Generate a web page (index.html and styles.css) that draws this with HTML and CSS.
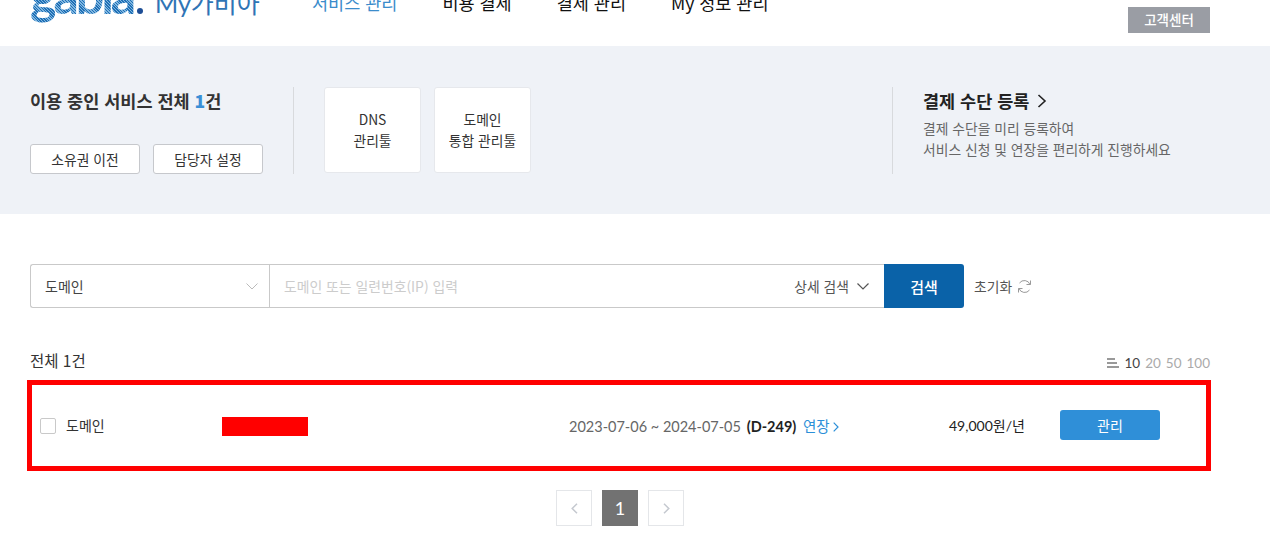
FILE: index.html
```html
<!DOCTYPE html>
<html lang="ko">
<head>
<meta charset="utf-8">
<title>My가비아</title>
<link rel="stylesheet" href="styles.css">
</head>
<body>
<header class="top">
  <div class="brand"><span class="logo">gabia</span><span class="dot"></span><span class="my">My가비아</span></div>
  <nav class="gnb">
    <a class="on">서비스 관리</a><a>비용 결제</a><a>결제 관리</a><a>My 정보 관리</a>
  </nav>
  <a class="help">고객센터</a>
</header>
<section class="band">
  <div class="summary">
    <h2>이용 중인 서비스 전체 <b>1</b>건</h2>
    <div class="sum-btns"><button>소유권 이전</button><button>담당자 설정</button></div>
  </div>
  <div class="tools">
    <a class="tool">DNS<br>관리툴</a>
    <a class="tool">도메인<br>통합 관리툴</a>
  </div>
  <div class="pay">
    <h3>결제 수단 등록 <svg width="10" height="14" viewBox="0 0 10 14"><path d="M1.500 1l6.500 6-6.500 6" fill="none" stroke="#222" stroke-width="1.600"/></svg></h3>
    <p>결제 수단을 미리 등록하여<br>서비스 신청 및 연장을 편리하게 진행하세요</p>
  </div>
</section>
<main class="content">
  <form class="search">
    <div class="box">
      <div class="sel">도메인<svg width="12" height="7" viewBox="0 0 12 7"><path d="M.5.5l5.500 5.500L11.500.5" fill="none" stroke="#bbb"/></svg></div>
      <div class="inp"><span class="ph">도메인 또는 일련번호(IP) 입력</span><span class="adv">상세 검색<svg width="12" height="7" viewBox="0 0 12 7"><path d="M.5.5l5.500 5.500L11.500.5" fill="none" stroke="#555" stroke-width="1.200"/></svg></span></div>
    </div>
    <button class="go" type="button">검색</button>
    <a class="reset">초기화<svg width="15" height="15" viewBox="0 0 15 15"><path d="M13 5.500A6 6 0 0 0 2.500 4M2 9.500A6 6 0 0 0 12.500 11" fill="none" stroke="#999"/><path d="M13.500 1.500v4h-4M1.500 13.500v-4h4" fill="none" stroke="#999"/></svg></a>
  </form>
  <div class="listhead">
    <span class="total">전체 1건</span>
    <span class="sizes"><i class="bars"><s></s><s></s><s></s></i><em>10</em><span>20</span><span>50</span><span>100</span></span>
  </div>
  <div class="row">
    <label class="name"><i class="chk"></i>도메인</label>
    <i class="redact"></i>
    <span class="date">2023-07-06 ~ 2024-07-05 <b>(D-249)</b> <a>연장<svg width="6" height="10" viewBox="0 0 6 10"><path d="M.7.7L5 5 .7 9.300" fill="none" stroke="#2b8fd8" stroke-width="1.200"/></svg></a></span>
    <span class="price">49,000원/년</span>
    <button class="manage">관리</button>
  </div>
  <div class="pager">
    <a><svg width="7" height="11" viewBox="0 0 7 11"><path d="M6 .8L1.200 5.500 6 10.200" fill="none" stroke="#c5c9d0" stroke-width="1.500"/></svg></a>
    <a class="cur">1</a>
    <a><svg width="7" height="11" viewBox="0 0 7 11"><path d="M1 .8l4.800 4.700L1 10.200" fill="none" stroke="#c5c9d0" stroke-width="1.500"/></svg></a>
  </div>
</main>
</body>
</html>
```
FILE: styles.css
```css
* { box-sizing: border-box; }
html, body { margin: 0; height: 551px; overflow: hidden; }
body { font-family: "Noto Sans CJK KR", "Noto Sans", sans-serif; color: #333; background: #fff; font-size: 14px; }
a { color: inherit; text-decoration: none; }
button { font-family: inherit; cursor: pointer; }
h2, h3, p { margin: 0; }

.top { height: 46px; display: flex; padding: 0 60px 0 30px; overflow: hidden; position: relative; }
.brand { display: flex; align-items: flex-end; height: 14px; width: 282px; flex: none; }
.logo { font: 700 50px/66px "Lato", sans-serif; letter-spacing: -3px; margin-bottom: -14px; width: 107px; flex: none; color: transparent; background: repeating-linear-gradient(45deg, #1f6fb5 0 1px, #7fb6e0 1px 2px); -webkit-background-clip: text; background-clip: text; }
.dot { width: 6px; height: 6px; border-radius: 50%; background: #1d4e96; flex: none; margin: 0 12px 0 0; }
.my { font: 400 25px/27px "Lato", "Noto Sans CJK KR", sans-serif; color: #2f74b5; margin-bottom: -3px; white-space: nowrap; }
.gnb { display: flex; gap: 45px; height: 14px; align-items: flex-end; font-size: 17.500px; line-height: 22px; color: #111; }
.gnb a { white-space: nowrap; }
.gnb .on { color: #3b8ccb; }
.help { margin-left: auto; margin-top: 7px; width: 82px; height: 26px; background: #9a9da4; color: #fff; font-size: 13.500px; font-weight: 500; text-align: center; line-height: 25px; white-space: nowrap; }

.band { height: 168px; background: #eff2f7; padding: 41px 60px 0 30px; display: flex; align-items: flex-start; }
.summary { width: 264px; height: 87px; border-right: 1px solid #d8dadd; display: flex; flex-direction: column; justify-content: space-between; }
.summary h2 { font-size: 17.500px; font-weight: 700; line-height: 28px; color: #333; }
.summary h2 b { color: #3a8fd6; }
.sum-btns { display: flex; gap: 13px; }
.sum-btns button { width: 110px; height: 30px; background: #fff; border: 1px solid #c6c8cc; border-radius: 3px; font-size: 13.800px; color: #333; padding: 0; }
.tools { display: flex; gap: 13px; padding-left: 30px; width: 598px; }
.tool { width: 97px; height: 86px; background: #fff; border: 1px solid #e6e8ec; border-radius: 3px; display: flex; align-items: center; justify-content: center; text-align: center; font-size: 13.800px; line-height: 21px; }
.pay { height: 87px; border-left: 1px solid #d8dadd; padding-left: 30px; }
.pay h3 { font-size: 17.500px; font-weight: 700; line-height: 28px; color: #222; }
.pay h3 svg { margin-left: 3px; }
.pay p { margin-top: 3px; font-size: 13.800px; line-height: 21px; color: #666; }

.content { padding: 50px 60px 0 30px; }
.search { display: flex; align-items: stretch; height: 44px; }
.box { width: 854px; display: flex; border: 1px solid #c9c9c9; border-right: 0; border-radius: 3px 0 0 3px; }
.sel { width: 239px; border-right: 1px solid #c9c9c9; display: flex; align-items: center; justify-content: space-between; padding: 0 11px 0 14px; color: #444; }
.inp { flex: 1; display: flex; align-items: center; justify-content: space-between; padding: 0 15px 0 14px; }
.ph { color: #ccc; font-size: 13.850px; }
.adv { font-size: 13.800px; color: #555; display: flex; align-items: center; gap: 8px; }
.go { width: 80px; border: 0; background: #0a62a8; color: #fff; border-radius: 0 3px 3px 0; font-size: 15px; font-weight: 500; padding: 0; }
.reset { margin-left: 10px; display: flex; align-items: center; gap: 5px; font-size: 13.800px; color: #555; }

.listhead { display: flex; justify-content: space-between; align-items: center; height: 24px; margin-top: 41px; }
.total { font-size: 15.500px; color: #333; margin-top: -2px; }
.sizes { display: flex; align-items: center; gap: 5px; font: 13.500px "Lato", sans-serif; color: #aaa; padding-top: 4px; }
.sizes em { font-style: normal; color: #444; }
.bars { display: flex; flex-direction: column; gap: 2px; align-items: flex-start; width: 12px; }
.bars s { display: block; height: 2px; background: #999; }
.bars s:nth-child(1) { width: 8px; }
.bars s:nth-child(2) { width: 10px; }
.bars s:nth-child(3) { width: 12px; }

.row { margin: 7px -1px 0 -3px; height: 91px; border: 5px solid #f00; display: flex; align-items: center; padding: 0 0 1px 8px; }
.name { width: 182px; display: flex; align-items: center; font-size: 14px; gap: 10px; color: #333; }
.chk { width: 16px; height: 16px; border: 1px solid #c9c9c9; border-radius: 2px; background: #fff; margin-top: 1px; }
.redact { width: 86px; height: 19px; background: #f00; margin: 3px 261px 0 0; }
.date { width: 380px; font: 14.500px "Lato", "Noto Sans CJK KR", sans-serif; color: #666; white-space: nowrap; }
.date b { color: #222; font-weight: 700; margin: 0 2px; }
.date a { color: #2b8fd8; margin-left: 1px; }
.date svg { margin-left: 3px; }
.price { width: 111px; font: 14px "Lato", "Noto Sans CJK KR", sans-serif; color: #222; white-space: nowrap; }
.manage { width: 100px; height: 30px; background: #2f8fd8; color: #fff; border: 0; border-radius: 3px; font-size: 14px; padding: 0; }

.pager { display: flex; justify-content: center; gap: 10px; margin-top: 19px; }
.pager a { width: 36px; height: 36px; border: 1px solid #e4e6e9; display: flex; align-items: center; justify-content: center; }
.pager .cur { background: #727272; border-color: #727272; color: #fff; font: 18px "Lato", sans-serif; }
```
